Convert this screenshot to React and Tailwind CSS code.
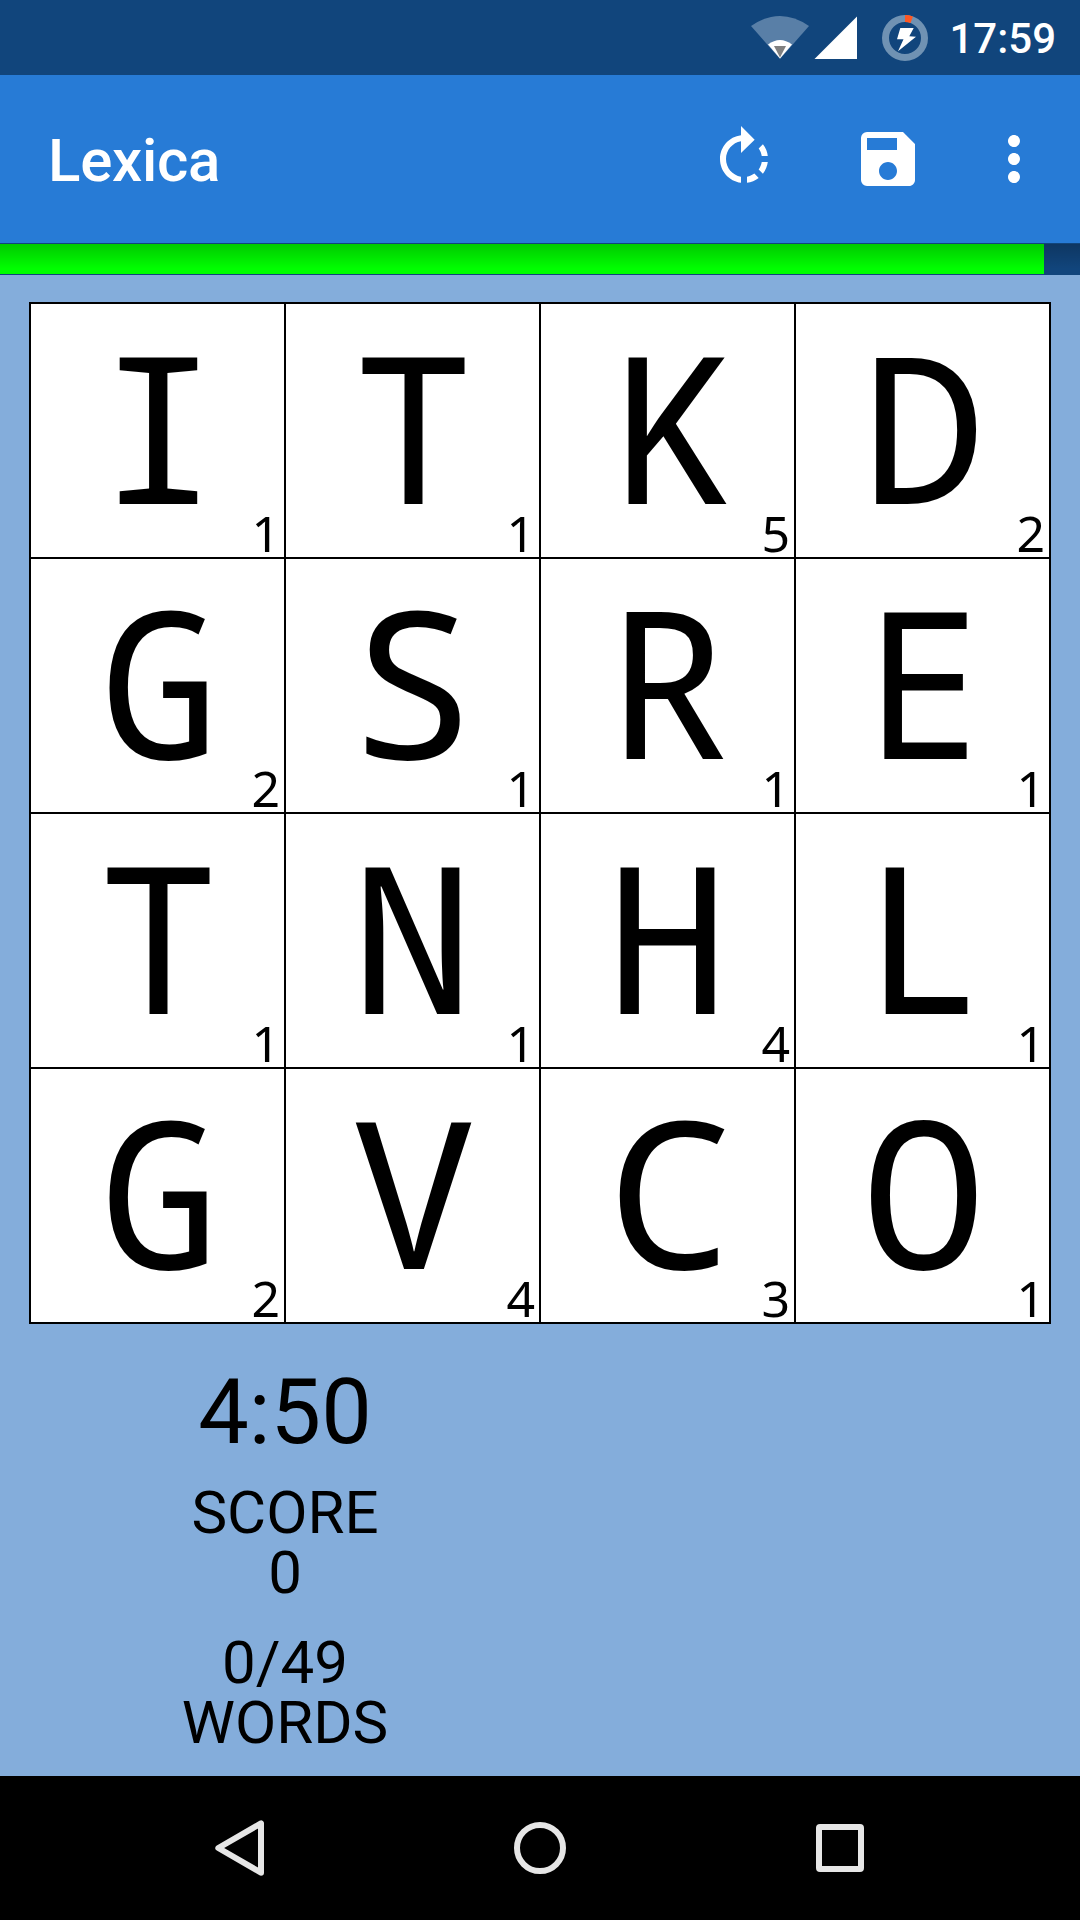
import React from "react";
import { MdRotateRight, MdSave, MdMoreVert } from "react-icons/md";

const TILES = [
  ["I", 1, "translate-x-px"],
  ["T", 1, "translate-x-px scale-x-98"],
  ["K", 5, "translate-x-[8px]"],
  ["D", 2, "translate-x-px scale-x-101"],
  ["G", 2, "translate-x-[3px] scale-x-98"],
  ["S", 1, "-translate-x-px scale-x-103"],
  ["R", 1, "translate-x-px"],
  ["E", 1, "translate-x-[2px] scale-x-96"],
  ["T", 1, "translate-x-px scale-x-98"],
  ["N", 1, ""],
  ["H", 4, ""],
  ["L", 1, "translate-x-px"],
  ["G", 2, "translate-x-[3px] scale-x-98"],
  ["V", 4, "translate-x-px scale-x-103"],
  ["C", 3, "translate-x-[3px] scale-x-106"],
  ["O", 1, "translate-x-px scale-x-101"],
];

function StatusBar() {
  return (
    <div className="flex h-[75px] items-center justify-end bg-[#11457c] pr-6 text-white">
      <svg className="h-[75px] w-[110px]" viewBox="750 0 110 75">
        <path d="M751 26 Q780 6 809 26 L780 59 Z" fill="#597fa7" />
        <path d="M768 44.500 Q780 35.500 792 44.500 L780 58.500 Z" fill="#fff" />
        <path d="M774 46 H786 L780 57.500 Z" fill="#808080" />
        <path d="M814.500 59 L857 16.500 V59 Z" fill="#fff" />
      </svg>
      <svg className="ml-[21px] h-[48px] w-[48px]" viewBox="881 13 48 48">
        <circle cx="905" cy="37" r="19.500" fill="none" stroke="#7092b3" strokeWidth="7" />
        <path d="M905 17.500 A19.500 19.500 0 0 1 911.700 18.700" fill="none" stroke="#ff5722" strokeWidth="7" />
        <path d="M900.300 27 H913.700 L909.300 35.300 L916 35.700 L898 50.300 L903.500 38.300 H897 Z" fill="#fff" />
      </svg>
      <span className="ml-5 pt-[3px] text-[42px] leading-[48px] font-medium">17:59</span>
    </div>
  );
}

function AppBar() {
  return (
    <header className="flex h-[168px] items-center bg-[#277bd6] pr-[30px] pl-12 text-white">
      <h1 className="flex-1 pt-1 text-[60px] leading-[70px] font-medium tracking-[-0.25px]">Lexica</h1>
      <MdRotateRight className="size-[72px]" />
      <MdSave className="ml-[72px] size-[72px]" />
      <MdMoreVert className="ml-[54px] size-[72px]" />
    </header>
  );
}

function TimeBar() {
  return (
    <div className="relative h-8 border-y border-[#11457c] bg-[#11457c]">
      <div className="h-[30px] w-[1044px] bg-[#00ff00]" />
      <div className="absolute inset-x-0 top-0 h-[25px] bg-linear-to-b from-black/21 to-transparent" />
    </div>
  );
}

function Tile({ letter, points, adjust }) {
  return (
    <div className="relative h-[255px] w-[255px] border-r-2 border-b-2 border-black bg-white text-center">
      <div
        className={`h-[242px] font-['Noto_Sans_Mono','DejaVu_Sans_Mono',monospace] text-[204px] leading-[242px] ${adjust}`}
      >
        {letter}
      </div>
      <span className="absolute right-1 -bottom-px font-['Noto_Sans',sans-serif] text-[50px] leading-[50px]">
        {points}
      </span>
    </div>
  );
}

function NavBar() {
  return (
    <nav className="flex h-36 items-center justify-center gap-60 bg-black">
      <svg className="size-15" viewBox="0 0 60 60" fill="none" stroke="#e6e6e6" strokeWidth="6" strokeLinejoin="round">
        <path d="M8.300 30 L51 5.300 V54.700 Z" />
      </svg>
      <svg className="size-15" viewBox="0 0 60 60" fill="none" stroke="#e6e6e6" strokeWidth="6">
        <circle cx="30" cy="30" r="23" />
      </svg>
      <svg className="size-15" viewBox="0 0 60 60" fill="#e6e6e6" fillRule="evenodd">
        <path d="M10 6 H50 A4 4 0 0 1 54 10 V50 A4 4 0 0 1 50 54 H10 A4 4 0 0 1 6 50 V10 A4 4 0 0 1 10 6 Z M12 12 V48 H48 V12 Z" />
      </svg>
    </nav>
  );
}

export default function App() {
  return (
    <div className="flex h-[1920px] w-[1080px] flex-col overflow-hidden bg-[#84addb] font-['Roboto',sans-serif] text-black">
      <StatusBar />
      <AppBar />
      <TimeBar />
      <main className="flex-1 pt-[27px]">
        <div className="mx-auto grid w-[1022px] grid-cols-4 border-t-2 border-l-2 border-black">
          {TILES.map(([letter, points, adjust], i) => (
            <Tile key={i} letter={letter} points={points} adjust={adjust} />
          ))}
        </div>
        <div className="w-[570px] pt-11 text-center text-[60px] leading-[60px]">
          <div className="text-[90px] leading-[90px]">4:50</div>
          <div className="pt-[25px]">SCORE</div>
          <div>0</div>
          <div className="pt-[30px]">0/49</div>
          <div>WORDS</div>
        </div>
      </main>
      <NavBar />
    </div>
  );
}
